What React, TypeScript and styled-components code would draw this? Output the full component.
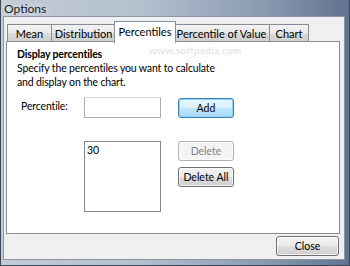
import React from "react";
import styled, { createGlobalStyle } from "styled-components";

const GlobalStyle = createGlobalStyle`
  html, body {
    margin: 0;
    padding: 0;
    width: 350px;
    height: 266px;
    overflow: hidden;
    font-family: Lato, "Open Sans", sans-serif;
  }
`;

const Window = styled.div`
  width: 350px;
  height: 266px;
  box-sizing: border-box;
  display: flex;
  flex-direction: column;
  padding: 0 4px 5px 2px;
  background: linear-gradient(90deg, #c3ccd7 0%, #b4c0ce 40%, #8a9bb2 75%, #5f7290 100%);
  border: 1px solid #3b4656;
  border-top: none;
`;

const TitleBar = styled.div`
  height: 16px;
  display: flex;
  align-items: center;
  padding-left: 1px;
  font-size: 12px;
  color: #1b1b1b;
  text-shadow: 0 0 6px rgba(255, 255, 255, 0.9);
`;

const Client = styled.div`
  flex: 1;
  background: #f0f0f0;
  border: 1px solid #8b97a6;
  display: flex;
  flex-direction: column;
  padding: 2px 4px 3px 2px;
`;

const TabRow = styled.div`
  display: flex;
  align-items: flex-end;
  height: 23px;
  padding-left: 2px;
  position: relative;
  z-index: 1;
`;

const Tab = styled.div<{ $active?: boolean; $w: number }>`
  box-sizing: border-box;
  flex: none;
  white-space: nowrap;
  width: ${(p) => p.$w}px;
  height: ${(p) => (p.$active ? 22 : 18)}px;
  border: 1px solid #898c95;
  border-bottom: ${(p) => (p.$active ? "none" : "1px solid #898c95")};
  margin: ${(p) => (p.$active ? "0 -2px -1px -2px" : "0 0 0 -1px")};
  background: ${(p) =>
    p.$active ? "#ffffff" : "linear-gradient(#f2f2f2 0%, #ebebeb 50%, #dddddd 51%, #cfcfcf 100%)"};
  font-size: 11px;
  color: #000;
  display: flex;
  align-items: center;
  justify-content: center;
  padding-bottom: ${(p) => (p.$active ? "3px" : "0")};
  position: relative;
  z-index: ${(p) => (p.$active ? 2 : 1)};
`;

const Panel = styled.div`
  flex: 1;
  background: #ffffff;
  border: 1px solid #898c95;
  margin-top: -1px;
  padding: 5px 10px;
  position: relative;
  display: flex;
  flex-direction: column;
  font-size: 10.5px;
  letter-spacing: -0.15px;
  color: #000;
`;

const Watermark = styled.div`
  position: absolute;
  top: 2px;
  left: 142px;
  font-size: 10px;
  letter-spacing: 0.3px;
  color: #e0e0e0;
`;

const Heading = styled.div`
  font-weight: 700;
  line-height: 14px;
`;

const Description = styled.div`
  line-height: 14px;
  white-space: nowrap;
`;

const Row = styled.div<{ $top: number }>`
  display: flex;
  align-items: flex-start;
  margin-top: ${(p) => p.$top}px;
`;

const Label = styled.div`
  width: 63px;
  padding-left: 4px;
  line-height: 19px;
`;

const TextBox = styled.div`
  box-sizing: border-box;
  width: 77px;
  height: 21px;
  border: 1px solid #abadb3;
  border-top-color: #dcdcdc;
  background: #fff;
`;

const ListBox = styled.div`
  box-sizing: border-box;
  width: 77px;
  height: 71px;
  border: 1px solid #828790;
  background: #fff;
  line-height: 15px;
  padding: 1px 2px;
`;

const ButtonColumn = styled.div`
  display: flex;
  flex-direction: column;
  gap: 6px;
  margin-left: 17px;
`;

const Button = styled.div<{ $focus?: boolean; $disabled?: boolean; $w?: number }>`
  box-sizing: border-box;
  width: ${(p) => p.$w ?? 56}px;
  height: 20px;
  margin-top: ${(p) => (p.$focus ? "1px" : "0")};
  border: 1px solid ${(p) => (p.$focus ? "#3c7fb1" : p.$disabled ? "#adb2b5" : "#707070")};
  border-radius: 3px;
  background: ${(p) =>
    p.$disabled
      ? "#f4f4f4"
      : p.$focus
      ? "linear-gradient(#eaf6fd 0%, #d9f0fc 50%, #bee6fd 51%, #a7d9f5 100%)"
      : "linear-gradient(#f2f2f2 0%, #ebebeb 50%, #dddddd 51%, #cfcfcf 100%)"};
  box-shadow: ${(p) => (p.$focus ? "inset 0 0 0 1px #8ad6f5" : "inset 0 0 0 1px rgba(255,255,255,0.7)")};
  font-size: 10.5px;
  letter-spacing: 0;
  color: ${(p) => (p.$disabled ? "#838383" : "#000")};
  display: flex;
  align-items: center;
  justify-content: center;
`;

const Footer = styled.div`
  display: flex;
  justify-content: flex-end;
  padding-top: 2px;
  padding-right: 1px;
`;

const tabs = [
  { name: "Mean", w: 45 },
  { name: "Distribution", w: 65 },
  { name: "Percentiles", w: 62, active: true },
  { name: "Percentile of Value", w: 97 },
  { name: "Chart", w: 40 },
];

export default function App() {
  return (
    <>
      <GlobalStyle />
      <Window>
        <TitleBar>Options</TitleBar>
        <Client>
          <TabRow>
            {tabs.map((t) => (
              <Tab key={t.name} $w={t.w} $active={t.active}>
                {t.name}
              </Tab>
            ))}
          </TabRow>
          <Panel>
            <Watermark>www.softpedia.com</Watermark>
            <Heading>Display percentiles</Heading>
            <Description>
              Specify the percentiles you want to calculate
              <br />
              and display on the chart.
            </Description>
            <Row $top={8}>
              <Label>Percentile:</Label>
              <TextBox />
              <ButtonColumn>
                <Button $focus>Add</Button>
              </ButtonColumn>
            </Row>
            <Row $top={23}>
              <Label />
              <ListBox>30</ListBox>
              <ButtonColumn>
                <Button $disabled>Delete</Button>
                <Button>Delete All</Button>
              </ButtonColumn>
            </Row>
          </Panel>
          <Footer>
            <Button $w={63}>Close</Button>
          </Footer>
        </Client>
      </Window>
    </>
  );
}
